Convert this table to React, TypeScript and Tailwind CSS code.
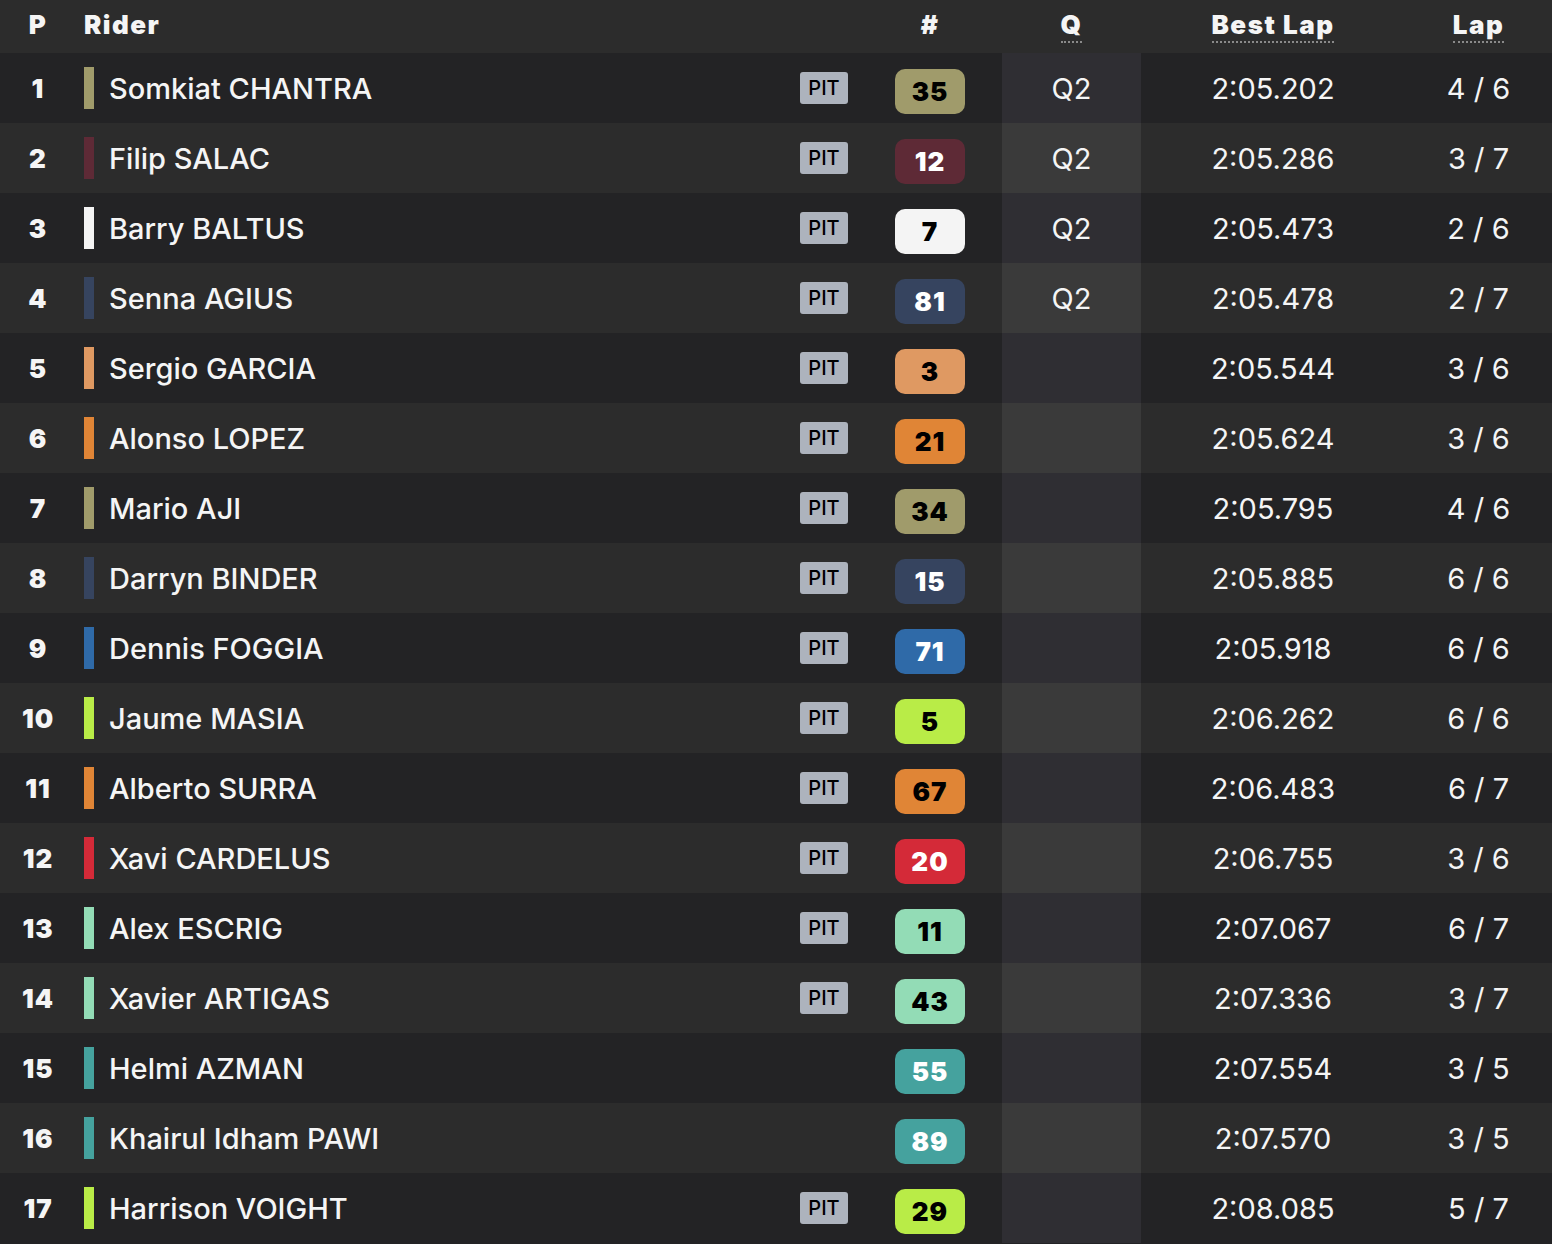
type Rider = {
  pos: number
  first: string
  last: string
  num: string
  color: string
  dark: boolean
  pit: boolean
  q: string
  best: string
  lap: string
}

const riders: Rider[] = [
  { pos: 1, first: 'Somkiat', last: 'CHANTRA', num: '35', color: 'bg-[#a09b6b]', dark: true, pit: true, q: 'Q2', best: '2:05.202', lap: '4 / 6' },
  { pos: 2, first: 'Filip', last: 'SALAC', num: '12', color: 'bg-[#5e2a36]', dark: false, pit: true, q: 'Q2', best: '2:05.286', lap: '3 / 7' },
  { pos: 3, first: 'Barry', last: 'BALTUS', num: '7', color: 'bg-[#f4f4f4]', dark: true, pit: true, q: 'Q2', best: '2:05.473', lap: '2 / 6' },
  { pos: 4, first: 'Senna', last: 'AGIUS', num: '81', color: 'bg-[#36445f]', dark: false, pit: true, q: 'Q2', best: '2:05.478', lap: '2 / 7' },
  { pos: 5, first: 'Sergio', last: 'GARCIA', num: '3', color: 'bg-[#df9962]', dark: true, pit: true, q: '', best: '2:05.544', lap: '3 / 6' },
  { pos: 6, first: 'Alonso', last: 'LOPEZ', num: '21', color: 'bg-[#e08536]', dark: true, pit: true, q: '', best: '2:05.624', lap: '3 / 6' },
  { pos: 7, first: 'Mario', last: 'AJI', num: '34', color: 'bg-[#a09b6b]', dark: true, pit: true, q: '', best: '2:05.795', lap: '4 / 6' },
  { pos: 8, first: 'Darryn', last: 'BINDER', num: '15', color: 'bg-[#36445f]', dark: false, pit: true, q: '', best: '2:05.885', lap: '6 / 6' },
  { pos: 9, first: 'Dennis', last: 'FOGGIA', num: '71', color: 'bg-[#2f6aa8]', dark: false, pit: true, q: '', best: '2:05.918', lap: '6 / 6' },
  { pos: 10, first: 'Jaume', last: 'MASIA', num: '5', color: 'bg-[#b9ec47]', dark: true, pit: true, q: '', best: '2:06.262', lap: '6 / 6' },
  { pos: 11, first: 'Alberto', last: 'SURRA', num: '67', color: 'bg-[#e08536]', dark: true, pit: true, q: '', best: '2:06.483', lap: '6 / 7' },
  { pos: 12, first: 'Xavi', last: 'CARDELUS', num: '20', color: 'bg-[#d42a38]', dark: false, pit: true, q: '', best: '2:06.755', lap: '3 / 6' },
  { pos: 13, first: 'Alex', last: 'ESCRIG', num: '11', color: 'bg-[#93dcb6]', dark: true, pit: true, q: '', best: '2:07.067', lap: '6 / 7' },
  { pos: 14, first: 'Xavier', last: 'ARTIGAS', num: '43', color: 'bg-[#93dcb6]', dark: true, pit: true, q: '', best: '2:07.336', lap: '3 / 7' },
  { pos: 15, first: 'Helmi', last: 'AZMAN', num: '55', color: 'bg-[#45a29e]', dark: false, pit: false, q: '', best: '2:07.554', lap: '3 / 5' },
  { pos: 16, first: 'Khairul Idham', last: 'PAWI', num: '89', color: 'bg-[#45a29e]', dark: false, pit: false, q: '', best: '2:07.570', lap: '3 / 5' },
  { pos: 17, first: 'Harrison', last: 'VOIGHT', num: '29', color: 'bg-[#b9ec47]', dark: true, pit: true, q: '', best: '2:08.085', lap: '5 / 7' },
]

const heavy = "font-['Inter',sans-serif] font-black"
const body = "font-['Inter',sans-serif]"

export default function App() {
  return (
    <div className="w-[1552px] h-[1244px] bg-[#232325] text-[#f5f5f5] overflow-hidden">
      {/* Header */}
      <div className={`flex h-[53px] items-center pb-[5px] bg-[#2c2c2c] text-[26px] tracking-[1.5px] ${heavy}`}>
        <div className="w-[76px] text-center">P</div>
        <div className="flex-1 pl-[8px]">Rider</div>
        <div className="w-[144px] text-center">#</div>
        <div className="w-[139px] text-center">
          <span className="border-b-2 border-dotted border-[#8a8a8a] pb-[1px]">Q</span>
        </div>
        <div className="w-[264px] text-center">
          <span className="border-b-2 border-dotted border-[#8a8a8a] pb-[1px]">Best Lap</span>
        </div>
        <div className="w-[147px] text-center">
          <span className="border-b-2 border-dotted border-[#8a8a8a] pb-[1px]">Lap</span>
        </div>
      </div>

      {/* Rows */}
      {riders.map((r, i) => {
        const even = i % 2 === 1
        return (
          <div
            key={r.pos}
            className={`flex h-[70px] items-center ${even ? 'bg-[#2c2c2c]' : 'bg-[#232325]'}`}
          >
            <div className={`w-[76px] text-center text-[26px] tracking-[1px] ${heavy}`}>{r.pos}</div>
            <div className="flex flex-1 items-center pl-[8px] pr-[10px]">
              <div className={`w-[10px] h-[42px] ${r.color}`} />
              <div className={`ml-[15px] mt-[2px] text-[29px] font-medium ${body}`}>
                {r.first} {r.last}
              </div>
              {r.pit && (
                <div className={`ml-auto w-[48px] h-[32px] rounded-[3px] bg-[#adb3bd] text-black text-[20px] font-medium flex items-center justify-center ${body}`}>
                  PIT
                </div>
              )}
            </div>
            <div className="w-[144px] flex justify-center">
              <div
                className={`w-[70px] h-[45px] mt-[7px] rounded-[10px] flex items-center justify-center text-[26px] tracking-[1px] ${heavy} ${r.color} ${r.dark ? 'text-black' : 'text-white'}`}
              >
                {r.num}
              </div>
            </div>
            <div
              className={`w-[139px] h-full flex items-center justify-center pt-[2px] text-[29px] ${body} ${even ? 'bg-[#3a3a3a]' : 'bg-[#2f2e33]'}`}
            >
              {r.q}
            </div>
            <div className={`w-[264px] text-center mt-[2px] text-[29px] ${body}`}>{r.best}</div>
            <div className={`w-[147px] text-center mt-[2px] text-[29px] ${body}`}>{r.lap}</div>
          </div>
        )
      })}
    </div>
  )
}
